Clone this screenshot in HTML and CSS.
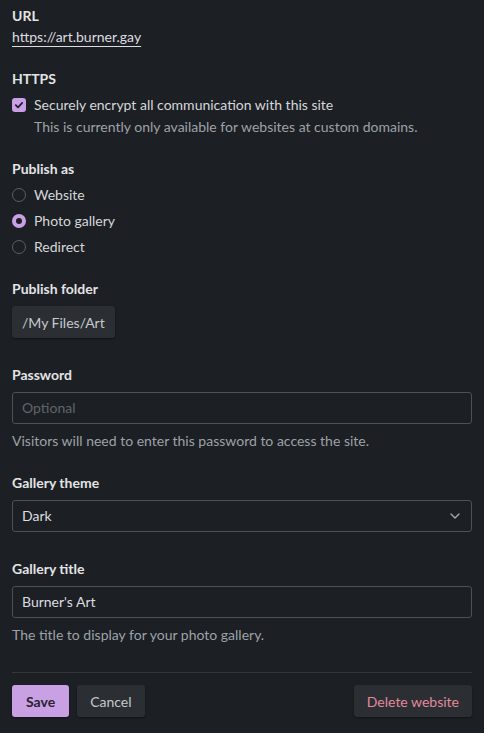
FILE: index.html
```html
<!DOCTYPE html>
<html lang="en">
<head>
    <meta charset="UTF-8">
    <meta name="viewport" content="width=device-width, initial-scale=1.0">
    <title>Website settings</title>
    <link rel="stylesheet" href="styles.css">
</head>
<body>
    <form class="settings">
        <div class="field">
            <div class="label">URL</div>
            <a class="site-link" href="#">https://art.burner.gay</a>
        </div>

        <div class="field">
            <div class="label label-option">HTTPS</div>
            <label class="option">
                <span class="checkbox checked">
                    <svg viewBox="0 0 14 14" width="14" height="14"><path d="M3.8 7.2 L6 9.3 L10.2 4.8" fill="none" stroke="#1c1f23" stroke-width="1.7" stroke-linecap="round" stroke-linejoin="round"/></svg>
                </span>
                Securely encrypt all communication with this site
            </label>
            <div class="hint indent">This is currently only available for websites at custom domains.</div>
        </div>

        <div class="field">
            <div class="label label-option">Publish as</div>
            <div class="options">
                <label class="option"><span class="radio"></span>Website</label>
                <label class="option"><span class="radio checked"></span>Photo gallery</label>
                <label class="option"><span class="radio"></span>Redirect</label>
            </div>
        </div>

        <div class="field field-control">
            <div class="label label-control">Publish folder</div>
            <button type="button" class="btn btn-folder">/My Files/Art</button>
        </div>

        <div class="field">
            <div class="label label-control">Password</div>
            <div class="input placeholder">Optional</div>
            <div class="hint after-input">Visitors will need to enter this password to access the site.</div>
        </div>

        <div class="field field-control">
            <div class="label label-control">Gallery theme</div>
            <div class="input select">
                <span>Dark</span>
                <svg viewBox="0 0 10 6" width="10" height="6"><path d="M1 1 L5 5 L9 1" fill="none" stroke="#a9aeb4" stroke-width="1.3" stroke-linecap="round" stroke-linejoin="round"/></svg>
            </div>
        </div>

        <div class="field">
            <div class="label label-control">Gallery title</div>
            <div class="input">Burner's Art</div>
            <div class="hint after-input">The title to display for your photo gallery.</div>
        </div>

        <div class="actions">
            <button type="button" class="btn btn-primary">Save</button>
            <button type="button" class="btn">Cancel</button>
            <button type="button" class="btn btn-danger">Delete website</button>
        </div>
    </form>
</body>
</html>
```

FILE: styles.css
```css
body {
    margin: 0;
    background-color: #1c1f23;
    color: #dcdde0;
    font-family: Lato, "Liberation Sans", sans-serif;
    font-size: 14px;
    line-height: 20px;
}

.settings {
    padding: 6px 12px 16px;
}

.field {
    display: flow-root;
    margin-bottom: 22px;
}

.field-control {
    margin-bottom: 27px;
}

.label {
    font-weight: bold;
    color: #e3e4e6;
    margin-bottom: 1px;
}

.label-option {
    margin-bottom: 6px;
}

.label-control {
    margin-bottom: 7px;
}

.site-link {
    color: #dcdde0;
    text-decoration: underline;
    text-underline-offset: 4px;
    text-decoration-thickness: 1px;
}

.options {
    display: flex;
    flex-direction: column;
    gap: 6px;
}

.option {
    display: flex;
    align-items: center;
    gap: 8px;
    color: #d6d7da;
}

.checkbox {
    width: 14px;
    height: 14px;
    border-radius: 3px;
    display: flex;
    align-items: center;
    justify-content: center;
}

.checkbox.checked {
    background-color: #c9a0e6;
}

.radio {
    width: 12px;
    height: 12px;
    border: 1px solid #5a6068;
    border-radius: 50%;
    box-sizing: content-box;
}

.radio.checked {
    width: 6px;
    height: 6px;
    border: 4px solid #c9a0e6;
    background-color: #1c1f23;
}

.hint {
    margin-top: 2px;
    color: #9ea2a8;
}

.hint.indent {
    padding-left: 22px;
}

.hint.after-input {
    margin-top: 7px;
}

.btn {
    height: 32px;
    padding: 0 13px;
    border: none;
    border-radius: 3px;
    background-color: #2b2f34;
    color: #c6c8cb;
    font-family: inherit;
    font-size: 14px;
    box-shadow: 0 1px 2px rgba(0, 0, 0, 0.35);
    cursor: pointer;
}

.btn-folder {
    padding: 0 10px;
}

.btn-primary {
    padding: 0 14px;
    background-color: #c9a0e4;
    color: #2a2230;
    font-weight: bold;
}

.btn-danger {
    margin-left: auto;
    color: #e3899c;
}

.input {
    height: 30px;
    border: 1px solid #4b5159;
    border-radius: 3px;
    padding: 0 9px;
    display: flex;
    align-items: center;
    color: #dcdde0;
}

.input.placeholder {
    color: #5f656c;
}

.select {
    justify-content: space-between;
    padding-right: 11px;
}

.actions {
    display: flex;
    gap: 8px;
    margin-top: 27px;
    padding-top: 12px;
    border-top: 1px solid #33373d;
}
```
